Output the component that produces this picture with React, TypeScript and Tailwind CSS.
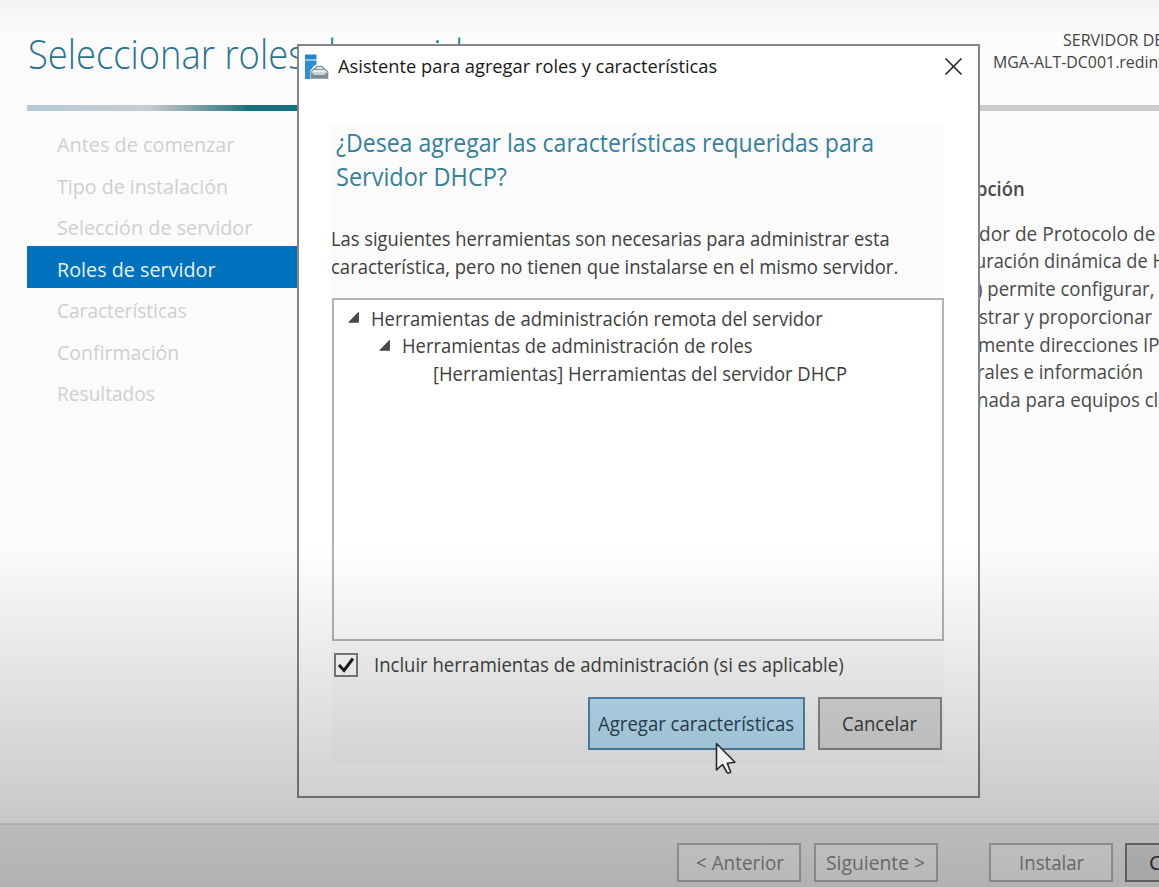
import { useLayoutEffect, useRef, useState } from "react";
import clsx from "clsx";

/* A single line of text stretched or condensed to the width of its box. */
function Line({ children, className }: { children: string; className: string }) {
  const box = useRef<HTMLDivElement>(null);
  const ink = useRef<HTMLSpanElement>(null);
  const [scale, setScale] = useState(1);
  useLayoutEffect(() => {
    if (box.current && ink.current) {
      setScale(box.current.clientWidth / ink.current.offsetWidth);
    }
  }, [children]);
  return (
    <div ref={box} className={clsx("shrink-0 whitespace-nowrap", className)}>
      <span ref={ink} className="inline-block origin-left" style={{ transform: `scaleX(${scale})` }}>
        {children}
      </span>
    </div>
  );
}

const steps = [
  { label: "Antes de comenzar", width: "w-[177px]" },
  { label: "Tipo de instalación", width: "w-[171px]" },
  { label: "Selección de servidor", width: "w-[195px]" },
  { label: "Roles de servidor", width: "w-[158px]", active: true },
  { label: "Características", width: "w-[130px]" },
  { label: "Confirmación", width: "w-[122px]" },
  { label: "Resultados", width: "w-[98px]" },
];

const description = [
  { text: "dor de Protocolo de", box: "w-[176px]" },
  { text: "uración dinámica de H", box: "w-[191px] -ml-[4px]" },
  { text: ") permite configurar,", box: "w-[178px] -ml-[2px]" },
  { text: "strar y proporcionar", box: "w-[173px]" },
  { text: "mente direcciones IP", box: "w-[181px] -ml-[1px]" },
  { text: "rales e información", box: "w-[166px] -ml-[2px]" },
  { text: "nada para equipos cl", box: "w-[181px] -ml-[2px]" },
];

function Expander() {
  return (
    <svg className="h-3 w-3 shrink-0" viewBox="0 0 12 12">
      <path d="M10.5 .3V10.3H.8Z" fill="#4a4a4a" stroke="#3c3c3c" strokeWidth=".8" />
    </svg>
  );
}

function WizardIcon() {
  return (
    <svg className="h-[26px] w-[24px] shrink-0" viewBox="0 0 24 26">
      <path d="M0 .5H11.5V5H0Z" fill="#1f86d2" />
      <path d="M0 6.5H11.5V10.5L7 14V25H0Z" fill="#2f8fd6" />
      <path d="M0 5H11.5V6.5H0Z" fill="#8cc3ea" />
      <path d="M5 17L9.5 11.5H19L24 16.5V25H5Z" fill="#fff" />
      <path d="M6 19.5V18L8.5 15.3H20L22.7 18V19.5Z" fill="#e9eef1" stroke="#8696a3" strokeWidth="1.3" />
      <path d="M9.5 15.3L12 12.5H17L19.5 15.3" fill="none" stroke="#8696a3" strokeWidth="1.4" />
      <path d="M5.4 20H23.3V24.8H5.4Z" fill="#7d8d9b" />
      <path d="M8.5 20H20" stroke="#eef2f5" strokeWidth="1.3" />
    </svg>
  );
}

function Dialog() {
  return (
    <section className="absolute left-[296.5px] top-[43.5px] flex h-[754px] w-[683px] flex-col border-2 border-[#858585] bg-white">
      <header className="flex h-[42px] shrink-0 items-center pl-[6px] pr-[15px] text-[19px] text-[#191919]">
        <WizardIcon />
        <Line className="ml-[9px] w-[379px]">Asistente para agregar roles y características</Line>
        <svg className="ml-auto h-[19px] w-[19px]" viewBox="0 0 19 19">
          <path d="M1.5 1.5L17.5 17.5M17.5 1.5L1.5 17.5" stroke="#222" strokeWidth="1.6" />
        </svg>
      </header>
      <div className="ml-[32px] mt-[37px] flex h-[638px] w-[613px] flex-col bg-[#fbfbfb]">
        <div className="pl-[5px] text-[25px] leading-[34.5px] text-[#35809a]">
          <Line className="w-[538px]">¿Desea agregar las características requeridas para</Line>
          <Line className="w-[171px]">Servidor DHCP?</Line>
        </div>
        <div className="mt-[31px] text-[19.5px] leading-[28px] text-[#404040]">
          <Line className="w-[559px]">Las siguientes herramientas son necesarias para administrar esta</Line>
          <Line className="w-[567px]">característica, pero no tienen que instalarse en el mismo servidor.</Line>
        </div>
        <div className="ml-px mt-[17px] flex h-[343px] w-[612px] shrink-0 flex-col border-2 border-[#b4b4b4] bg-white pt-[5px] text-[19.5px] leading-[27.7px] text-[#404040]">
          <div className="flex items-center gap-[11px] pl-[14px]">
            <Expander />
            <Line className="w-[452px]">Herramientas de administración remota del servidor</Line>
          </div>
          <div className="flex items-center gap-[11px] pl-[45px]">
            <Expander />
            <Line className="w-[351px]">Herramientas de administración de roles</Line>
          </div>
          <div className="flex pl-[99px]">
            <Line className="w-[414px]">[Herramientas] Herramientas del servidor DHCP</Line>
          </div>
        </div>
        <div className="mt-[10px] flex h-[28px] items-center pl-[3px] text-[19.5px] text-[#404040]">
          <div className="flex h-[24px] w-[24px] items-center justify-center border-2 border-[#7c7c7c] bg-white">
            <svg className="h-[18px] w-[18px]" viewBox="0 0 18 18">
              <path d="M2 9L7 14.5L16 2.5" fill="none" stroke="#1c1c1c" strokeWidth="3" />
            </svg>
          </div>
          <Line className="ml-[16px] w-[470px]">Incluir herramientas de administración (si es aplicable)</Line>
        </div>
        <div className="mt-[18px] flex justify-end gap-[13px] text-[19.5px]">
          <button className="flex h-[53px] w-[217px] items-center justify-center border-2 border-[#5489af] bg-[#bbe3f9] pt-px text-[#2c4455]">
            <Line className="w-[196px]">Agregar características</Line>
          </button>
          <button className="mr-[2px] flex h-[53px] w-[124px] items-center justify-center border-2 border-[#8a8a8a] bg-[#dcdcdc] pt-px text-[#3c3c3c]">
            <Line className="w-[75px]">Cancelar</Line>
          </button>
        </div>
      </div>
    </section>
  );
}

export default function App() {
  return (
    <main className="relative flex h-[887px] w-[1159px] flex-col overflow-hidden bg-[#fbfbfb] font-['Open_Sans','Noto_Sans',sans-serif]">
      <div className="flex h-[105px] shrink-0 items-start justify-between bg-linear-to-b from-[#f4f4f4] to-[#fbfbfb] to-35%">
        <Line className="ml-[28px] mt-[26px] w-[471px] text-[41px] leading-[54px] font-light text-[#2b7490]">
          Seleccionar roles de servidor
        </Line>
        <div className="flex w-[180px] flex-col overflow-hidden pt-[29px] text-[16px] leading-[22px] text-[#444]">
          <Line className="ml-[84px] w-[100px]">SERVIDOR DE</Line>
          <Line className="ml-[14px] w-[171px]">MGA-ALT-DC001.redint</Line>
        </div>
      </div>
      <div className="ml-[27px] flex h-[6px] shrink-0">
        <div className="w-[271px] bg-linear-to-r from-[#b4cbd8] via-[#c8cccd] via-45% to-[#14707e] to-82%" />
        <div className="flex-1 bg-[#cbcbcb]" />
      </div>
      <div className="flex h-[712px] shrink-0 justify-between">
        <nav className="ml-[27px] w-[271px] pt-[10.5px] text-[19.5px] text-[#cfcfcf]">
          {steps.map((step) => (
            <div
              key={step.label}
              className={clsx("flex h-[41.5px] items-center pl-[30px] pt-[5px]", step.active && "bg-[#0071bc] text-[#e6f3fb]")}
            >
              <Line className={step.width}>{step.label}</Line>
            </div>
          ))}
        </nav>
        <aside className="w-[180px] overflow-hidden pt-[64px] text-[19.5px] leading-[27.7px] text-[#4a4a4a]">
          <Line className="-ml-[3px] mb-[17px] w-[49px] font-semibold">pción</Line>
          {description.map((line) => (
            <Line key={line.text} className={line.box}>
              {line.text}
            </Line>
          ))}
        </aside>
      </div>
      <footer className="flex h-[64px] shrink-0 items-start border-t-2 border-[#dedede] bg-[#ececec] pl-[677px] pt-[18px] text-[19.5px] text-[#878787]">
        <button className="flex h-[39px] w-[124px] shrink-0 items-center justify-center border-2 border-[#b3b3b3] bg-[#f4f4f4] pt-px">
          <Line className="ml-px w-[88px]">{"< Anterior"}</Line>
        </button>
        <button className="ml-[13px] flex h-[39px] w-[124px] shrink-0 items-center justify-center border-2 border-[#b3b3b3] bg-[#f4f4f4] pt-px">
          <Line className="mr-[2px] w-[99px]">{"Siguiente >"}</Line>
        </button>
        <button className="ml-[51px] flex h-[39px] w-[124px] shrink-0 items-center justify-center border-2 border-[#b3b3b3] bg-[#f4f4f4] pt-px">
          <Line className="w-[65px]">Instalar</Line>
        </button>
        <button className="ml-[12px] flex h-[39px] w-[124px] shrink-0 items-center border-2 border-[#7b7b7b] bg-[#dcdcdc] pl-[22px] pt-px text-[#333]">
          <Line className="w-[13px]">C</Line>
        </button>
      </footer>
      <Dialog />
      <div className="pointer-events-none absolute inset-x-0 bottom-0 h-[342px] bg-linear-to-b from-black/0 to-black/25" />
      <svg className="pointer-events-none absolute left-[715px] top-[742px] h-[34px] w-[24px]" viewBox="0 0 24 34">
        <path
          d="M1.5 1.5V28L7.5 22.5L12 30.5Q13.7 32 15.7 30L12.3 21.3L20 20.3Z"
          fill="#f0f0f0"
          stroke="#2b2b2b"
          strokeWidth="1.6"
          strokeLinejoin="round"
        />
      </svg>
    </main>
  );
}
